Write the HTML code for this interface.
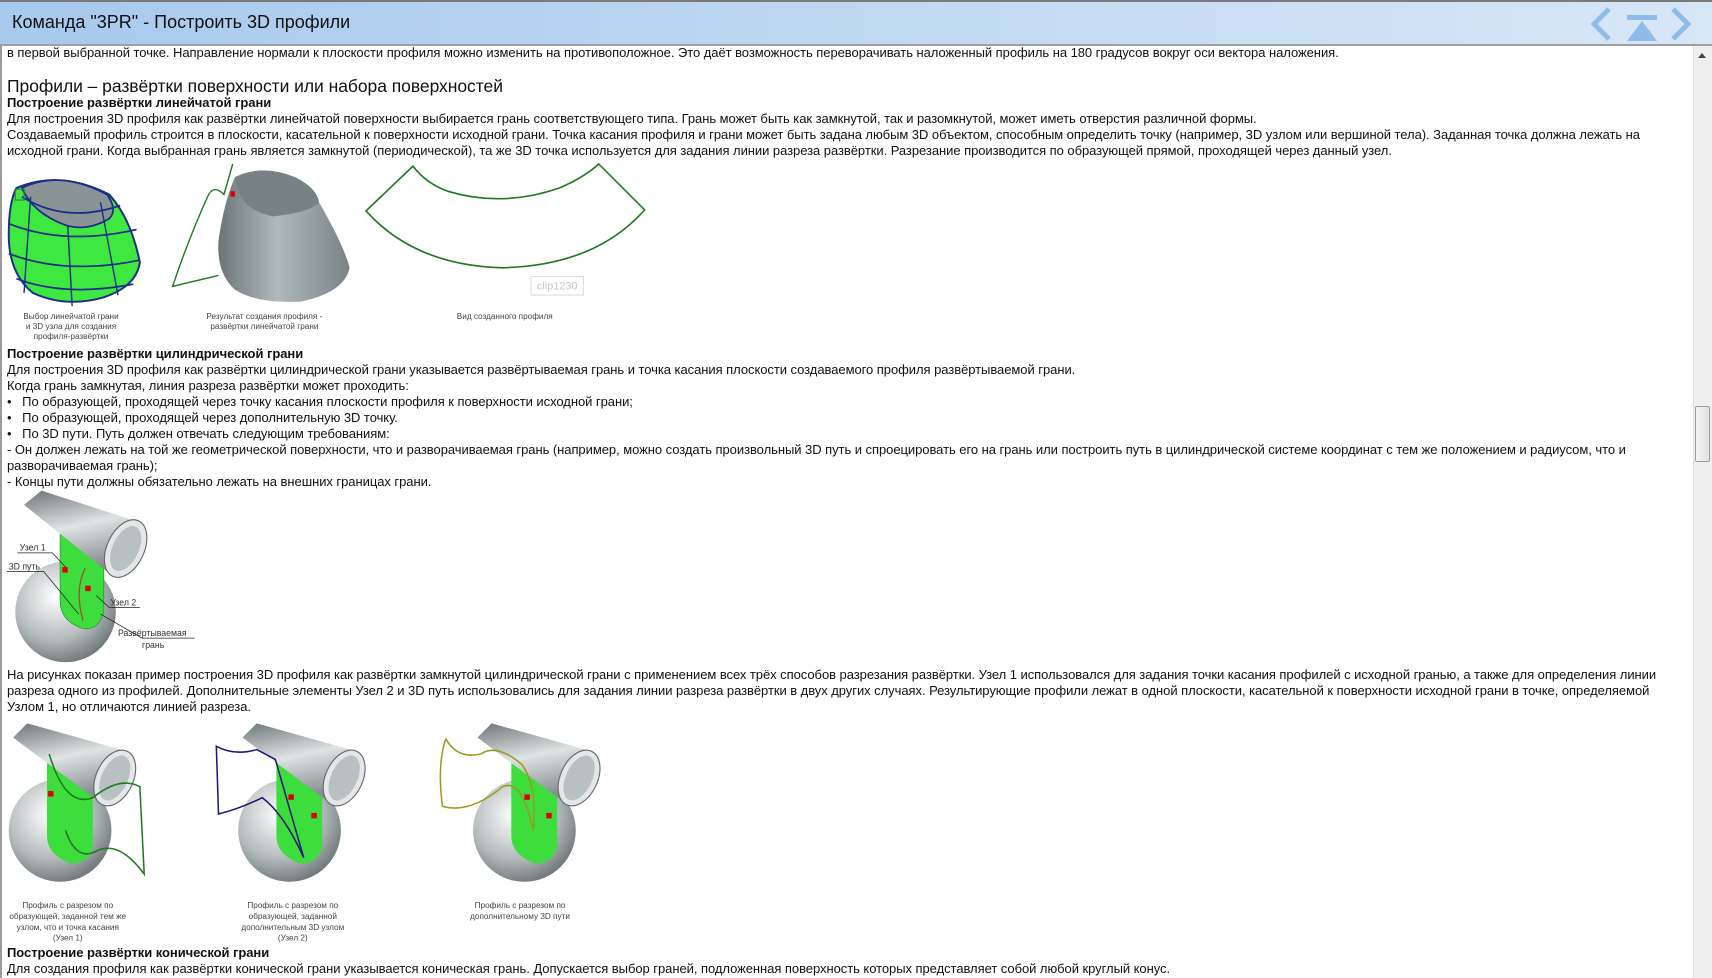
<!DOCTYPE html>
<html><head><meta charset="utf-8"><style>
*{margin:0;padding:0;box-sizing:border-box}
body{width:1712px;height:978px;overflow:hidden;background:#fff;font-family:"Liberation Sans",Arial,sans-serif;color:#111;position:relative}
#hdr{position:absolute;left:0;top:0;width:1712px;height:46px;background:linear-gradient(90deg,#a7c9ee 0%,#c4dbf3 60%,#d8e7f6 100%);border-top:2px solid #7a7a7a;border-bottom:2px solid #a0a0a0}
#hdr .t{position:absolute;left:12px;top:10px;font-size:18px;color:#111}
#lb{position:absolute;left:0;top:46px;width:2px;height:932px;background:#9a9a9a}
#sb{position:absolute;left:1693px;top:46px;width:19px;height:932px;background:#efefef;border-left:1px solid #e2e2e2}
#thumb{position:absolute;left:1695px;top:406px;width:15px;height:56px;background:linear-gradient(90deg,#f4f4f4,#e2e2e2);border:1px solid #9c9c9c;border-radius:2px}
.l{position:absolute;left:7px;font-size:13px;line-height:16px;white-space:nowrap;letter-spacing:-0.05px}
.b{font-weight:bold}
.h{font-size:17.5px;line-height:20px}
svg{position:absolute}
</style></head><body>
<div id="hdr"><div class="t">Команда "3PR" - Построить 3D профили</div>
<svg style="left:1585px;top:3px" width="120" height="38" viewBox="0 0 120 38">
<polyline points="24,4 9,19 24,34" fill="none" stroke="#8fbbea" stroke-width="5"/>
<rect x="42" y="10" width="30" height="5" fill="#8fbbea"/>
<polygon points="57,16 42,36 72,36" fill="#8fbbea"/>
<polyline points="88,4 103,19 88,34" fill="none" stroke="#8fbbea" stroke-width="5"/>
</svg></div>
<div id="lb"></div>
<div id="sb"></div><div id="thumb"></div>
<svg style="left:1697px;top:52px" width="10" height="8"><polygon points="5,1 9,6 1,6" fill="#444"/></svg>

<div class="l" style="top:45px">в первой выбранной точке. Направление нормали к плоскости профиля можно изменить на противоположное. Это даёт возможность переворачивать наложенный профиль на 180 градусов вокруг оси вектора наложения.</div>
<div class="l h" style="top:76px">Профили – развёртки поверхности или набора поверхностей</div>
<div class="l b" style="top:95px">Построение развёртки линейчатой грани</div>
<div class="l" style="top:111px">Для построения 3D профиля как развёртки линейчатой поверхности выбирается грань соответствующего типа. Грань может быть как замкнутой, так и разомкнутой, может иметь отверстия различной формы.</div>
<div class="l" style="top:127px">Создаваемый профиль строится в плоскости, касательной к поверхности исходной грани. Точка касания профиля и грани может быть задана любым 3D объектом, способным определить точку (например, 3D узлом или вершиной тела). Заданная точка должна лежать на</div>
<div class="l" style="top:143px">исходной грани. Когда выбранная грань является замкнутой (периодической), та же 3D точка используется для задания линии разреза развёртки. Разрезание производится по образующей прямой, проходящей через данный узел.</div>

<div class="l b" style="top:346px">Построение развёртки цилиндрической грани</div>
<div class="l" style="top:362px">Для построения 3D профиля как развёртки цилиндрической грани указывается развёртываемая грань и точка касания плоскости создаваемого профиля развёртываемой грани.</div>
<div class="l" style="top:378px">Когда грань замкнутая, линия разреза развёртки может проходить:</div>
<div class="l" style="top:394px">•&nbsp;&nbsp;&nbsp;По образующей, проходящей через точку касания плоскости профиля к поверхности исходной грани;</div>
<div class="l" style="top:410px">•&nbsp;&nbsp;&nbsp;По образующей, проходящей через дополнительную 3D точку.</div>
<div class="l" style="top:426px">•&nbsp;&nbsp;&nbsp;По 3D пути. Путь должен отвечать следующим требованиям:</div>
<div class="l" style="top:442px">- Он должен лежать на той же геометрической поверхности, что и разворачиваемая грань (например, можно создать произвольный 3D путь и спроецировать его на грань или построить путь в цилиндрической системе координат с тем же положением и радиусом, что и</div>
<div class="l" style="top:458px">разворачиваемая грань);</div>
<div class="l" style="top:474px">- Концы пути должны обязательно лежать на внешних границах грани.</div>

<div class="l" style="top:667px">На рисунках показан пример построения 3D профиля как развёртки замкнутой цилиндрической грани с применением всех трёх способов разрезания развёртки. Узел 1 использовался для задания точки касания профилей с исходной гранью, а также для определения линии</div>
<div class="l" style="top:683px">разреза одного из профилей. Дополнительные элементы Узел 2 и 3D путь использовались для задания линии разреза развёртки в двух других случаях. Результирующие профили лежат в одной плоскости, касательной к поверхности исходной грани в точке, определяемой</div>
<div class="l" style="top:699px">Узлом 1, но отличаются линией разреза.</div>

<div class="l b" style="top:945px">Построение развёртки конической грани</div>
<div class="l" style="top:961px">Для создания профиля как развёртки конической грани указывается коническая грань. Допускается выбор граней, подложенная поверхность которых представляет собой любой круглый конус.</div>

<svg style="left:0;top:0" width="1712" height="978" viewBox="0 0 1567 895" font-family="Liberation Sans">
<defs>
<linearGradient id="gr" x1="0" x2="1"><stop offset="0" stop-color="#6c7476"/><stop offset=".45" stop-color="#b0babc"/><stop offset="1" stop-color="#7a8486"/></linearGradient>
<radialGradient id="sp" cx=".4" cy=".35" r=".7"><stop offset="0" stop-color="#fff"/><stop offset=".6" stop-color="#b5bcbd"/><stop offset="1" stop-color="#6a7274"/></radialGradient>
<linearGradient id="tb" x1="0" y1="0" x2=".3" y2="1"><stop offset="0" stop-color="#6d7577"/><stop offset=".5" stop-color="#dfe3e3"/><stop offset="1" stop-color="#858d8f"/></linearGradient>
<g id="tee">
<circle cx="55" cy="760" r="47" fill="url(#sp)"/>
<path d="M43,688 L85,700 L85,775 Q80,792 64,790 Q43,782 43,765Z" fill="#3ddd3d"/>
<path d="M12,675 L25,662 L118,688 L92,735Z" fill="url(#tb)"/>
<ellipse cx="105" cy="712" rx="17" ry="27" transform="rotate(25 105 712)" fill="#e3e7e7" stroke="#666"/>
<ellipse cx="105" cy="712" rx="12" ry="22" transform="rotate(25 105 712)" fill="#b9c0c1"/>
</g>
</defs>
<!-- fig1 -->
<path d="M15,172 Q55,155 100,178 Q120,200 128,240 Q125,262 95,272 Q60,282 30,268 Q8,250 8,215 Q8,185 15,172Z" fill="#3ee83e" stroke="#1a2d8a" stroke-width="1.8"/>
<path d="M20,172 Q55,155 98,178 Q108,192 100,200 Q80,212 60,206 Q30,195 20,172Z" fill="#8a9396" stroke="#1a2d8a" stroke-width="1.6"/>
<path d="M9,205 Q60,225 125,210 M8,232 Q60,252 128,238 M15,255 Q60,272 122,260 M20,180 Q60,205 110,188" fill="none" stroke="#1a2d8a" stroke-width="1.6"/>
<path d="M28,180 L22,268 M62,206 L66,280 M92,185 L108,270" fill="none" stroke="#1a2d8a" stroke-width="1.3"/>
<rect x="14" y="173" width="8" height="10" fill="none" stroke="#3a7a3a"/>
<text font-size="7.5" fill="#444" text-anchor="middle"><tspan x="65" y="292">Выбор линейчатой грани</tspan><tspan x="65" y="301">и 3D узла для создания</tspan><tspan x="65" y="310">профиля-развёртки</tspan></text>
<!-- fig2 -->
<path d="M213,150 L205,178 Q195,168 190,180 Q172,220 158,262 L200,252" fill="none" stroke="#1f7a1f" stroke-width="1.3"/>
<path d="M215,162 Q240,150 270,162 Q290,172 292,185 Q315,225 320,245 Q315,268 275,276 Q235,278 215,265 Q198,250 200,220 Q205,185 215,162Z" fill="url(#gr)"/>
<path d="M215,162 Q218,192 250,198 Q285,194 292,185 Q290,172 270,162 Q240,150 215,162Z" fill="#788284"/>
<rect x="211" y="175" width="4" height="5" fill="#d00"/>
<text font-size="7.5" fill="#444" text-anchor="middle"><tspan x="242" y="292">Результат создания профиля -</tspan><tspan x="242" y="301">развёртки линейчатой грани</tspan></text>
<!-- fig3 -->
<path d="M335,193 L378,152 Q390,168 410,175 Q460,190 512,172 Q535,162 548,150 L590,192 Q545,243 460,245 Q380,243 335,193Z" fill="none" stroke="#1f7a1f" stroke-width="1.5"/>
<rect x="486" y="253" width="48" height="17" fill="#fff" stroke="#ddd"/>
<text x="510" y="265" font-size="10" fill="#c8c8c8" text-anchor="middle">clip1230</text>
<text x="462" y="292" font-size="7.5" fill="#444" text-anchor="middle">Вид созданного профиля</text>
<!-- cyl fig -->
<circle cx="60" cy="560" r="46" fill="url(#sp)"/>
<path d="M55,485 L95,495 L95,560 Q90,578 75,575 Q55,568 55,550Z" fill="#3ddd3d" stroke="#2a8a2a" stroke-width=".6"/>
<path d="M22,462 L38,449 L128,478 L103,527Z" fill="url(#tb)"/>
<ellipse cx="115" cy="502" rx="17" ry="28" transform="rotate(25 115 502)" fill="#e3e7e7" stroke="#666"/>
<ellipse cx="115" cy="502" rx="12" ry="22" transform="rotate(25 115 502)" fill="#b9c0c1"/>
<path d="M78,520 Q68,540 76,568" fill="none" stroke="#a0522d" stroke-width="1.2"/>
<rect x="57" y="519" width="5" height="5" fill="#d00"/><rect x="78" y="536" width="5" height="5" fill="#d00"/>
<path d="M16,506 L48,506 L60,519 M6,523 L40,523 L72,562 M128,556 L100,556 L88,545 M178,584 L130,584 L92,562" fill="none" stroke="#222" stroke-width=".7"/>
<text font-size="8" fill="#333"><tspan x="18" y="504">Узел 1</tspan><tspan x="8" y="521">3D путь</tspan><tspan x="101" y="554">Узел 2</tspan><tspan x="108" y="582">Развёртываемая</tspan><tspan x="130" y="593">грань</tspan></text>
<!-- bottom tees -->
<use href="#tee"/>
<path d="M45,690 Q60,740 85,730 Q110,710 128,720 L132,800 Q110,770 90,778 Q70,790 60,760" fill="none" stroke="#1f7a1f" stroke-width="1.4"/>
<rect x="44" y="724" width="5" height="5" fill="#d00"/>
<use href="#tee" x="210"/>
<path d="M198,683 Q215,692 235,686 L252,695 L278,785 Q260,745 240,730 Q220,740 200,745Z" fill="none" stroke="#1a1a7a" stroke-width="1.4"/>
<rect x="264" y="727" width="5" height="5" fill="#d00"/><rect x="285" y="744" width="5" height="5" fill="#d00"/>
<use href="#tee" x="425"/>
<path d="M408,676 Q400,700 405,738 Q430,745 460,720 Q478,712 488,760 Q492,720 478,700 Q455,680 440,690 Q418,695 408,676" fill="none" stroke="#9a9a20" stroke-width="1.4"/>
<rect x="480" y="727" width="5" height="5" fill="#d00"/><rect x="500" y="744" width="5" height="5" fill="#d00"/>
<text font-size="7.5" fill="#444" text-anchor="middle"><tspan x="62" y="831">Профиль с разрезом по</tspan><tspan x="62" y="841">образующей, заданной тем же</tspan><tspan x="62" y="851">узлом, что и точка касания</tspan><tspan x="62" y="861">(Узел 1)</tspan></text>
<text font-size="7.5" fill="#444" text-anchor="middle"><tspan x="268" y="831">Профиль с разрезом по</tspan><tspan x="268" y="841">образующей, заданной</tspan><tspan x="268" y="851">дополнительным 3D узлом</tspan><tspan x="268" y="861">(Узел 2)</tspan></text>
<text font-size="7.5" fill="#444" text-anchor="middle"><tspan x="476" y="831">Профиль с разрезом по</tspan><tspan x="476" y="841">дополнительному 3D пути</tspan></text>
</svg>
</body></html>
